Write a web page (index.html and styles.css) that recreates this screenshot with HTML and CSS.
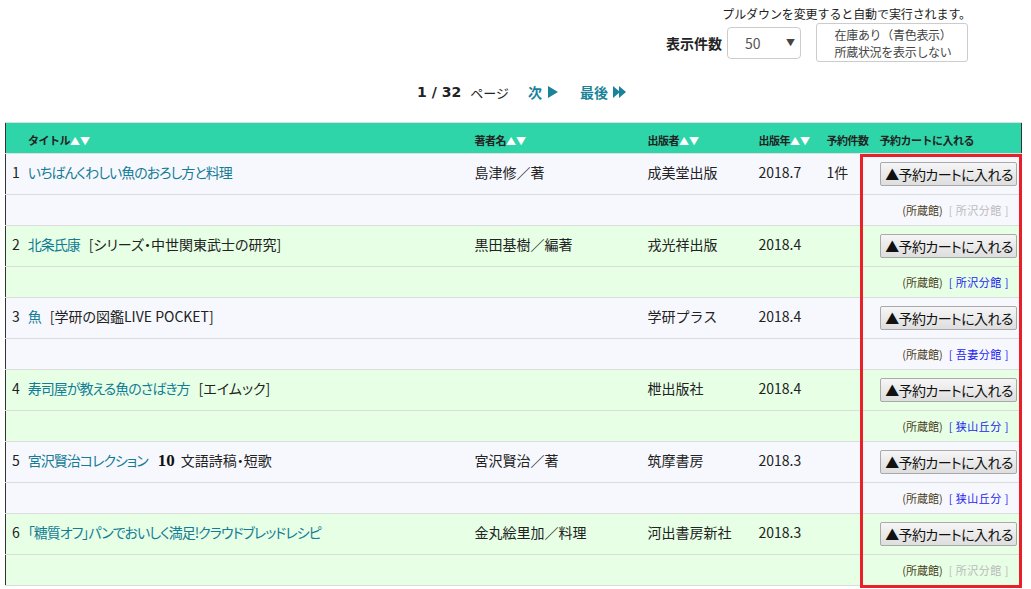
FILE: index.html
```html
<!DOCTYPE html>
<html lang="ja">
<head>
<meta charset="utf-8">
<link rel="stylesheet" href="styles.css">
</head>
<body>
<div class="page">
  <div class="controls">
    <div class="note">プルダウンを変更すると自動で実行されます。</div>
    <div class="control-row">
      <span class="count-label">表示件数</span>
      <div class="select"><span>50</span><span class="caret">▼</span></div>
      <div class="toggle-btn">在庫あり（青色表示）<br>所蔵状況を表示しない</div>
    </div>
  </div>

  <div class="pager">
    <span class="pnum">1 / 32</span>
    <span class="plabel">ページ</span>
    <a class="plink">次<svg class="tri" viewBox="0 0 12 12" width="12" height="12"><path d="M1 0 L11 6 L1 12 Z"/></svg></a>
    <a class="plink">最後<svg class="tri2" viewBox="0 0 13 12" width="13" height="12"><path d="M0 0 L7 6 L0 12 Z M6 0 L13 6 L6 12 Z"/></svg></a>
  </div>

  <table class="results">
    <colgroup>
      <col class="c-title"><col class="c-author"><col class="c-pub"><col class="c-year"><col class="c-count"><col class="c-cart">
    </colgroup>
    <thead>
      <tr>
        <th class="th-title">タイトル<span class="arr">▲▼</span></th>
        <th>著者名<span class="arr">▲▼</span></th>
        <th>出版者<span class="arr">▲▼</span></th>
        <th>出版年<span class="arr">▲▼</span></th>
        <th>予約件数</th>
        <th>予約カートに入れる</th>
      </tr>
    </thead>
    <tbody>
      <tr class="main odd">
        <td class="title"><span class="no">1</span><a>いちばんくわしい魚のおろし方と料理</a></td>
        <td>島津修／著</td><td>成美堂出版</td><td>2018.7</td><td>1件</td>
        <td><button class="cart">▲予約カートに入れる</button></td>
      </tr>
      <tr class="sub odd"><td colspan="5"></td><td class="lib">(所蔵館)<span class="branch off">[ 所沢分館 ]</span></td></tr>

      <tr class="main even">
        <td class="title"><span class="no">2</span><a>北条氏康</a><span class="series">[シリーズ・中世関東武士の研究]</span></td>
        <td>黒田基樹／編著</td><td>戎光祥出版</td><td>2018.4</td><td></td>
        <td><button class="cart">▲予約カートに入れる</button></td>
      </tr>
      <tr class="sub even"><td colspan="5"></td><td class="lib">(所蔵館)<span class="branch on">[ 所沢分館 ]</span></td></tr>

      <tr class="main odd">
        <td class="title"><span class="no">3</span><a>魚</a><span class="series">[学研の図鑑LIVE POCKET]</span></td>
        <td></td><td>学研プラス</td><td>2018.4</td><td></td>
        <td><button class="cart">▲予約カートに入れる</button></td>
      </tr>
      <tr class="sub odd"><td colspan="5"></td><td class="lib">(所蔵館)<span class="branch on">[ 吾妻分館 ]</span></td></tr>

      <tr class="main even">
        <td class="title"><span class="no">4</span><a>寿司屋が教える魚のさばき方</a><span class="series">[エイムック]</span></td>
        <td></td><td>枻出版社</td><td>2018.4</td><td></td>
        <td><button class="cart">▲予約カートに入れる</button></td>
      </tr>
      <tr class="sub even"><td colspan="5"></td><td class="lib">(所蔵館)<span class="branch on">[ 狭山丘分 ]</span></td></tr>

      <tr class="main odd">
        <td class="title"><span class="no">5</span><a>宮沢賢治コレクション</a><b class="vol">10</b><span class="subtitle">文語詩稿・短歌</span></td>
        <td>宮沢賢治／著</td><td>筑摩書房</td><td>2018.3</td><td></td>
        <td><button class="cart">▲予約カートに入れる</button></td>
      </tr>
      <tr class="sub odd"><td colspan="5"></td><td class="lib">(所蔵館)<span class="branch on">[ 狭山丘分 ]</span></td></tr>

      <tr class="main even">
        <td class="title"><span class="no">6</span><a>「糖質オフ」パンでおいしく満足!クラウドブレッドレシピ</a></td>
        <td>金丸絵里加／料理</td><td>河出書房新社</td><td>2018.3</td><td></td>
        <td><button class="cart">▲予約カートに入れる</button></td>
      </tr>
      <tr class="sub even"><td colspan="5"></td><td class="lib">(所蔵館)<span class="branch off">[ 所沢分館 ]</span></td></tr>
    </tbody>
  </table>

  <div class="highlight"></div>
</div>
</body>
</html>
```

FILE: styles.css
```css
* { box-sizing: border-box; }
html, body {
  margin: 0;
  padding: 0;
  background: #fff;
}
body {
  font-family: "Noto Sans CJK JP", "Noto Sans", sans-serif;
  color: #222;
  font-size: 14px;
  overflow: hidden;
}
.page {
  position: relative;
  width: 1031px;
  height: 589px;
  overflow: hidden;
}

/* top controls */
.controls {
  display: flex;
  flex-direction: column;
  align-items: flex-end;
  padding: 5px 63px 0 0;
}
.note {
  font-size: 12px;
  line-height: 17px;
  color: #222;
  letter-spacing: -0.1px;
  margin-right: -3px;
}
.control-row {
  display: flex;
  align-items: center;
  margin-top: 1px;
  height: 39px;
}
.count-label {
  font-weight: bold;
  font-size: 14px;
  margin-right: 5px;
  color: #222;
}
.select {
  width: 74px;
  height: 32px;
  border: 1px solid #ccc;
  border-radius: 4px;
  display: flex;
  align-items: center;
  justify-content: space-between;
  padding: 0 5px 0 17px;
  font-size: 14px;
  color: #555;
  margin-right: 15px;
}
.caret {
  font-size: 9px;
  color: #444;
}
.toggle-btn {
  width: 152px;
  height: 39px;
  border: 1px solid #ccc;
  border-radius: 3px;
  font-size: 12px;
  line-height: 17px;
  text-align: center;
  color: #444;
  padding: 2px 0 0 2px;
  letter-spacing: -0.3px;
}

/* pager */
.pager {
  display: flex;
  align-items: center;
  justify-content: center;
  padding-left: 12px;
  margin-top: 19px;
  height: 22px;
  font-size: 14px;
}
.pnum {
  font-family: "DejaVu Sans", "Noto Sans", sans-serif;
  font-weight: bold;
  font-size: 14px;
  color: #222;
  margin-right: 9px;
}
.plabel {
  font-size: 13px;
  color: #222;
  margin-right: 19px;
}
.plink {
  display: inline-flex;
  align-items: center;
  font-weight: bold;
  color: #1b8399;
  margin-right: 21px;
}
.plink:last-child { margin-right: 0; }
.plink svg { fill: #1b8399; margin-left: 5px; }

/* table */
.results {
  margin: 19px 0 0 5px;
  width: 1016px;
  border-collapse: collapse;
  table-layout: fixed;
  border-left: 1px solid #333;
  border-right: 1px solid #333;
}
.c-title { width: 463px; }
.c-author { width: 173px; }
.c-pub { width: 111px; }
.c-year { width: 68px; }
.c-count { width: 53px; }
.c-cart { width: 148px; }

.results thead th {
  background: #2dd5a9;
  height: 31px;
  font-size: 11px;
  font-weight: bold;
  color: #222;
  text-align: left;
  padding: 3px 0 0 6px;
  border-top: 1px solid #ddd;
  border-bottom: 1px solid #e0e0e0;
  white-space: nowrap;
  letter-spacing: -0.5px;
}
.results thead th.th-title { padding-left: 22px; }
.arr {
  color: #fff;
  font-size: 10px;
  letter-spacing: 0;
}
.results td {
  padding: 0 0 0 6px;
  vertical-align: middle;
  white-space: nowrap;
  font-size: 14px;
  color: #222;
  border-bottom: 1px solid #dcdcdc;
}
.results tr.main td { height: 41px; padding-top: 0; padding-bottom: 4px; }
.results tr.sub td { height: 31px; }
.odd td { background: #f7f8fe; }
.even td { background: #e6ffe5; }

.title .no { margin-right: 8px; color: #222; }
.title a {
  color: #157c96;
  font-feature-settings: "palt";
  letter-spacing: -1px;
}
.series {
  margin-left: 9px;
  color: #222;
  font-feature-settings: "palt";
}
.subtitle {
  font-feature-settings: "palt";
}
.vol {
  font-family: "Liberation Serif", serif;
  font-weight: bold;
  font-size: 17px;
  margin: 0 6px 0 10px;
  color: #111;
}

.cart {
  width: 137px;
  height: 24px;
  font-family: "Noto Sans CJK JP", sans-serif;
  font-size: 14px;
  font-feature-settings: "palt";
  letter-spacing: -0.6px;
  padding: 0 0 0 2px;
  color: #111;
  border: 1px solid #a9a9a9;
  border-radius: 2px;
  background: linear-gradient(#f6f6f6, #dedede);
  line-height: 20px;
  margin-top: 4px;
}

.lib {
  text-align: right;
  padding-right: 12px !important;
  font-size: 11px !important;
  color: #4a3c1a !important;
}
.branch { margin-left: 6px; letter-spacing: 0.5px; }
.branch.off { color: #bbb; }
.branch.on { color: #1c1cf0; }

.highlight {
  position: absolute;
  left: 860px;
  top: 154px;
  width: 162px;
  height: 434px;
  border: 3px solid #e8202a;
  pointer-events: none;
}
```
